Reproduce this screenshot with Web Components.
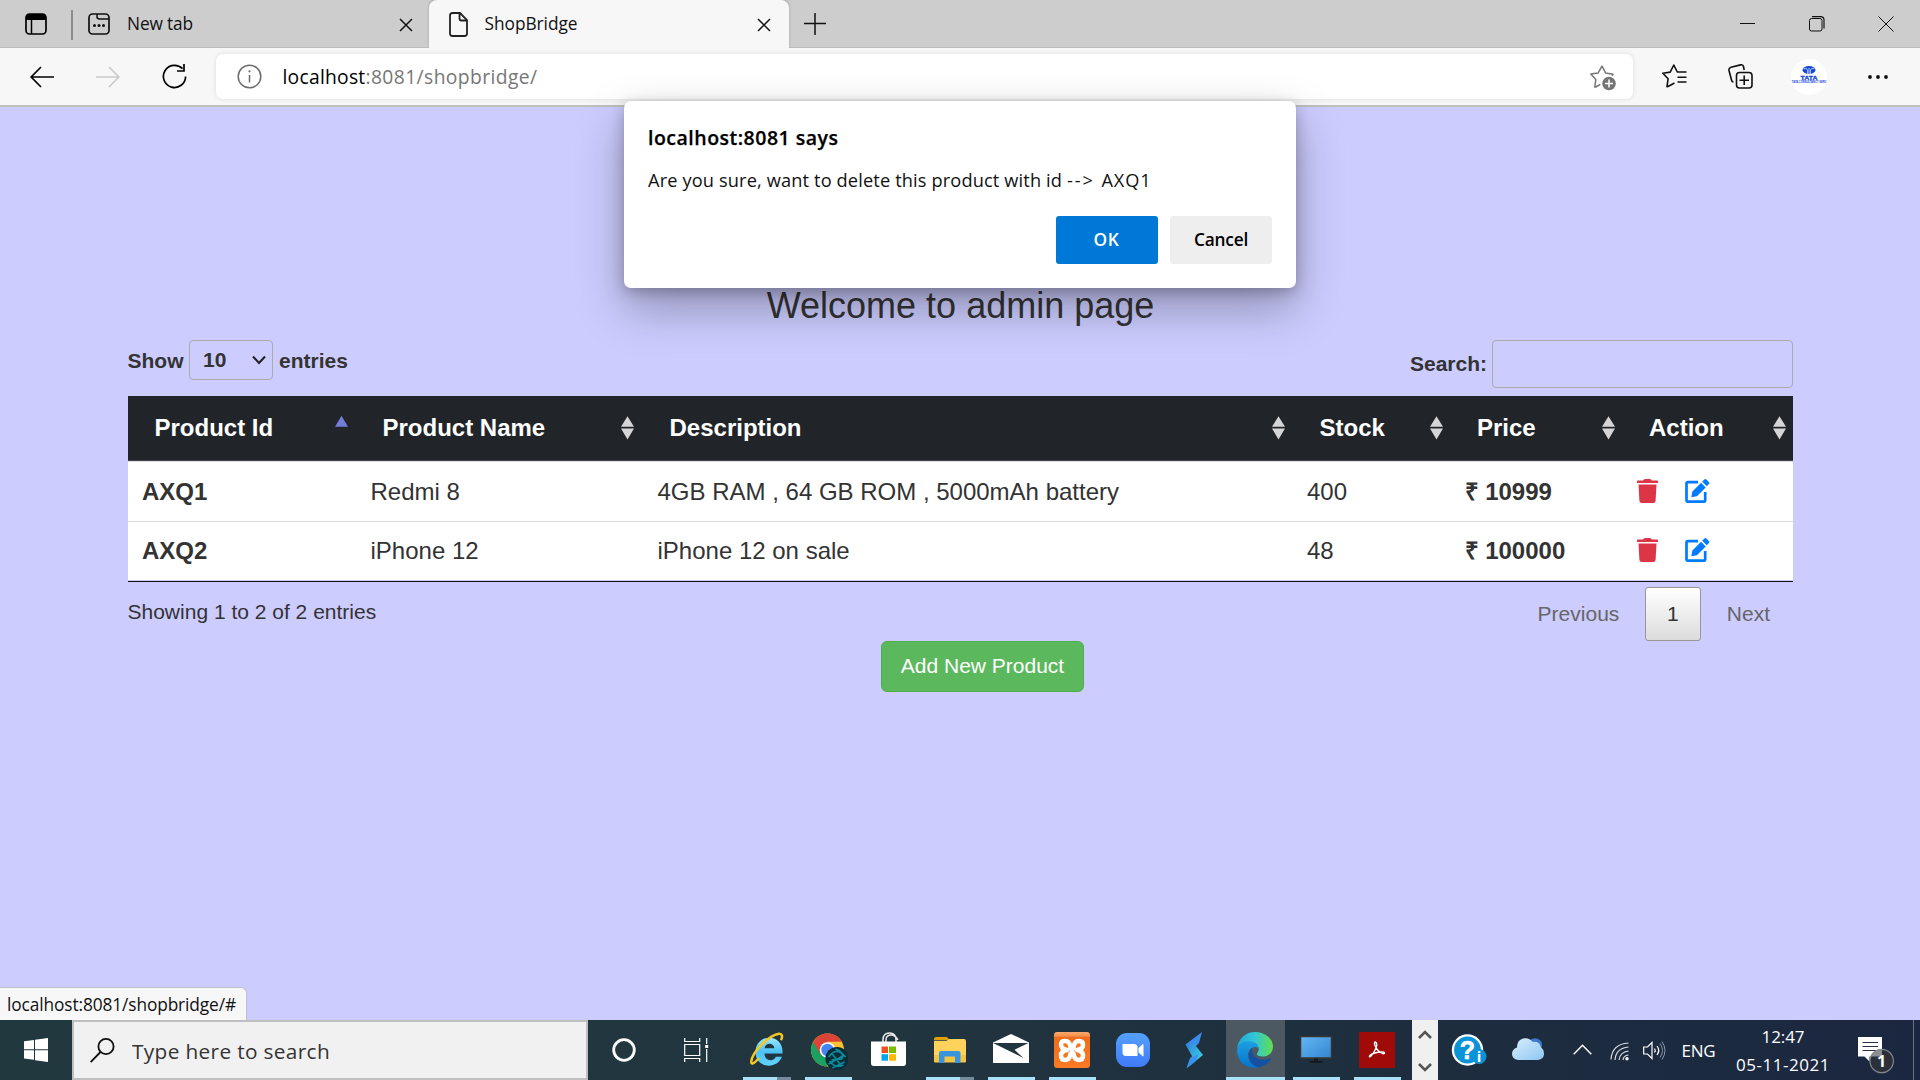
<!DOCTYPE html>
<html lang="en">
<head>
<meta charset="utf-8">
<title>ShopBridge</title>
<style>
html,body{margin:0;height:100%;overflow:hidden}
body{font-family:"Liberation Sans",Arial,sans-serif;color:#333}
</style>
</head>
<body>
<desktop-screen></desktop-screen>
<script>
const UI = '"Open Sans","Noto Sans",sans-serif';
function define(name, css, html, init) {
  const tpl = document.createElement('template');
  tpl.innerHTML = '<style>*{box-sizing:border-box}svg{display:block}' + css + '</style>' + html;
  customElements.define(name, class extends HTMLElement {
    constructor() { super(); this.attachShadow({mode: 'open'}).appendChild(tpl.content.cloneNode(true)); }
    connectedCallback() { if (init) init.call(this, this.shadowRoot); }
  });
}

/* Icons: name -> [width, height, markup] */
const ICONS = {
  tabsMenu: [22,22,'<rect x="1" y="1" width="20" height="20" rx="3.5" fill="none" stroke="#000" stroke-width="1.7"/><path d="M1 7V4.500Q1 1 4.500 1h13Q21 1 21 4.500V7z" fill="#000"/><path d="M6.500 6v15" stroke="#000" stroke-width="1.5"/>'],
  newTab: [22,22,'<rect x="1" y="1" width="20" height="20" rx="3.5" fill="none" stroke="#111" stroke-width="1.7"/><path d="M9 1v2.500Q9 6 11.500 6H21" fill="none" stroke="#111" stroke-width="1.5"/><g fill="#111"><circle cx="6.500" cy="12.500" r="1.500"/><circle cx="11" cy="12.500" r="1.500"/><circle cx="15.500" cy="12.500" r="1.500"/></g>'],
  close: [14,14,'<path d="M1 1l12 12M13 1L1 13" stroke="#111" stroke-width="1.5"/>'],
  file: [19,25,'<path d="M3.500 1h7.500L18 8v13.500Q18 24 15.500 24h-12Q1 24 1 21.500v-18Q1 1 3.500 1zM10.500 1v5.500Q10.500 8.500 12.500 8.500H18" fill="none" stroke="#222" stroke-width="1.8"/>'],
  plus: [22,22,'<path d="M11 0v22M0 10.500h22" stroke="#111" stroke-width="1.5"/>'],
  min: [16,16,'<path d="M0 7.500h15" stroke="#111" stroke-width="1"/>'],
  max: [16,16,'<rect x=".5" y="2.500" width="12.500" height="12.500" rx="2" fill="none" stroke="#111"/><path d="M3 .7h8.500Q15 .7 15 4v8.500" fill="none" stroke="#111" stroke-width="1.2"/>'],
  winClose: [16,16,'<path d="M.5.5l15 15M15.500.5l-15 15" stroke="#111" stroke-width="1"/>'],
  back: [24,22,'<path d="M24 11H1.500M11 1L1.200 11l9.800 10" fill="none" stroke="#000" stroke-width="1.7"/>'],
  fwd: [24,22,'<path d="M0 11h22.500M13 1l9.800 10L13 21" fill="none" stroke="#cacaca" stroke-width="1.7"/>'],
  reload: [25,25,'<path d="M20.500 4.700A11.100 11.100 0 1 0 23.600 12.500M22 0v7h-7" fill="none" stroke="#000" stroke-width="1.7"/>'],
  info: [25,25,'<circle cx="12.500" cy="12.500" r="11.300" fill="none" stroke="#6c6c6c" stroke-width="1.500"/><path d="M12.500 11v7.500" stroke="#6c6c6c" stroke-width="1.500"/><circle cx="12.500" cy="7.300" r="1.100" fill="#6c6c6c"/>'],
  starAdd: [27,26,'<path d="M10.300 19.300L5.800 22l-1 .1 1-7.500-5-5.500 7.300-1.100L12 1.100l3.600 6.900 7.500 1.200-1.300 1.500" fill="none" stroke="#757575" stroke-width="1.500" stroke-linejoin="round"/><circle cx="19" cy="18.500" r="6.800" fill="#757575"/><path d="M19 14.500v8M15 18.500h8" stroke="#fff" stroke-width="1.500"/>'],
  favs: [25,25,'<path d="M12.500 19L6 22.500l-1 .2 1.100-8L.9 9.200l7.300-1.100L11.800 1l3.500 7h9.200M15.500 13.200h9M15.500 18h9" fill="none" stroke="#111" stroke-width="1.600" stroke-linejoin="round"/>'],
  collections: [25,25,'<rect x="8.500" y="8.500" width="15.500" height="15.500" rx="3" fill="none" stroke="#111" stroke-width="1.600"/><path d="M16.200 11.500v9.500M11.500 16.200H21M5.500 18Q4 18 3.500 16L1 6.500Q.5 4 3 3.300l9.500-2.400q2.500-.5 3 1.600L16.200 6" fill="none" stroke="#111" stroke-width="1.600"/>'],
  dots: [20,6,'<g fill="#111"><circle cx="2" cy="3" r="1.900"/><circle cx="10" cy="3" r="1.900"/><circle cx="18" cy="3" r="1.900"/></g>'],
  tata: [36,36,'<circle cx="18" cy="18" r="18" fill="#fff"/><ellipse cx="18" cy="11" rx="6.500" ry="4" fill="#1648dc"/><path d="M16.600 15.500V11Q16.500 9 12.500 9.500M19.400 15.500V11Q19.500 9 23.500 9.500M18 9v6" fill="none" stroke="#c5d2ff" stroke-width=".9"/><text x="18" y="20.600" text-anchor="middle" font-family="Liberation Sans" font-weight="700" font-size="5.600" fill="#1648dc" stroke="#1648dc" stroke-width=".3" textLength="17" lengthAdjust="spacingAndGlyphs">TATA</text><text x=".8" y="24.400" font-family="Liberation Sans" font-weight="700" font-size="2.700" fill="#1648dc" textLength="34.500" lengthAdjust="spacingAndGlyphs">TATA CONSULTANCY SERV</text>'],
  chevDown: [14,10,'<path d="M1 1.500l6 6.500 6-6.500" fill="none" stroke="#222" stroke-width="2"/>'],
  sortBoth: [13,24,'<path d="M6.500.3L13 10.800H0zM0 12.600h13L6.500 23.500z" fill="#d5d5d8"/>'],
  sortAsc: [13,24,'<path d="M6.500-.2L13 10.800H0z" fill="#747cda"/>'],
  trash: [21,24,'<path d="M6 1.500L7 .4Q7.400 0 8 0h5q.6 0 1 .4l1 1.100h5.200q.8 0 .8.8V4H0V2.300q0-.8.800-.8zM1.500 5.600h18l-.9 16.200Q18.500 24 16.300 24H4.700Q2.500 24 2.400 21.800z" fill="#dc3545"/>'],
  edit: [25,24,'<path d="M13 3.200H3Q1.500 3.200 1.500 4.700v16.500q0 1.500 1.500 1.500h15.700q1.500 0 1.500-1.500V13" fill="none" stroke="#007bff" stroke-width="2.700"/><path d="M6.300 18.300l1.100-5.700L16.100 3.800l4.600 4.600-8.800 8.800zM17.200 2.700L19.400.6q1-1 2 0l2.500 2.500q1 1 0 2l-2.100 2.200z" fill="#007bff"/>'],
  windows: [24,24,'<path d="M0 3.200L10 1.900v9.400H0zM11 1.700L24 0v11.300H11zM0 12.300h10v9.400L0 20.600zM11 12.300h13V24l-13-1.800z" fill="#fff"/>'],
  search: [25,25,'<circle cx="16" cy="8.500" r="7.600" fill="none" stroke="#111" stroke-width="1.800"/><path d="M10.500 14L.6 24.200" stroke="#111" stroke-width="1.800"/>'],
  cortana: [24,24,'<circle cx="12" cy="12" r="10.300" fill="none" stroke="#fff" stroke-width="2.800"/>'],
  taskview: [25,24,'<path d="M.7 0v3.500h15V0M.7 24v-3.500h15V24M.7 6.500h15v11H.7zM22.700 0v6M22.700 11v13" fill="none" stroke="#fff" stroke-width="1.200"/><path d="M21.200 7h3v3h-3z" fill="#fff"/>'],
  ie: [36,36,'<defs><linearGradient id="a" x2="0" y2="1"><stop stop-color="#9be9ff"/><stop offset=".5" stop-color="#4bc2f5"/><stop offset="1" stop-color="#62d5fc"/></linearGradient></defs><path d="M33.500 21.500H15.500c0 8 9.500 8.500 11.300 3.300h6.200C28 38 6.500 36.500 6.500 20 6.500 1 35 .5 33.500 21.500zM15.600 16.300h9.800c-.5-6-9.400-6-9.800 0z" fill="url(#a)"/><path d="M10 26C4.500 32 2 33 2.300 29.500 3 20 20 3 30 1.700c3-.2 4 2.500 2 6.500" fill="none" stroke="#f5c523" stroke-width="2.500"/>'],
  chrome: [40,40,'<g transform="translate(2.500 1)"><circle cx="17" cy="17" r="16.500" fill="#f9c42f"/><path d="M2.600 9A16.600 16.600 0 0 0 16 33.600l7-10-6-6.600z" fill="#19a15f"/><path d="M2.600 9L10 21.500 17 17V8.700h14.300Q27 .5 17 .5 7.500.5 2.600 9z" fill="#dc4437"/><circle cx="17" cy="17" r="7.800" fill="#fff"/><circle cx="17" cy="17" r="6.200" fill="#4285f4"/><circle cx="26.500" cy="25.500" r="11.600" fill="#082c38"/><path d="M18 24q8-11 17 0M19 28q6 8 14 4M25 16q10 4 6 10l-10 1M18 31l16-9M22 35l12-6M21 20l10 13" fill="none" stroke="#0a8c9c" stroke-width="1.600"/></g>'],
  store: [36,36,'<path d="M12 11V8q0-7 6.500-7T25 8v3M15 11V8q0-4.500 4.500-5T27 8" fill="none" stroke="#e8e8e8" stroke-width="1.500"/><path d="M0 9.500h35v21.500Q35 34 32.500 34H2.500Q0 34 0 31z" fill="#fff"/><path d="M10.500 14.500H17v6.500h-6.500z" fill="#f25022"/><path d="M18 14.500h7v6.500h-7z" fill="#7fba00"/><path d="M10.500 22.200H17v6.500h-6.500z" fill="#00a4ef"/><path d="M18 22.200h7v6.500h-7z" fill="#ffb900"/>'],
  folder: [36,36,'<path d="M2 7Q2 5 4 5h11l2.500 3H2z" fill="#dfa000"/><path d="M2 8.800h12.500L17 7h15q2 0 2 2v21H2z" fill="#ffd35b"/><path d="M2 23h32v6.500q0 1-1 1H3q-1 0-1-1z" fill="#f6c443"/><path d="M7 31V21q0-2 2-2h17.500q2 0 2 2v10h-5.500v-6.500H12.500V31z" fill="#3895dc"/>'],
  mail: [36,36,'<path d="M0 10.500L18 2l18 8.500V31H0z" fill="#fff"/><path d="M0 11h35.500L21.500 17.800 30.500 26z" fill="#21353f"/>'],
  xampp: [36,36,'<defs><linearGradient id="b" x2="0" y2="1"><stop stop-color="#f9a96f"/><stop offset=".12" stop-color="#f38f48"/><stop offset=".14" stop-color="#ee6d1c"/><stop offset="1" stop-color="#fb7a24"/></linearGradient></defs><rect width="36" height="36" rx="3" fill="url(#b)"/><path d="M13 18q-6-1-6-5.500Q7 9 11 9t5 4q0 3 2 5 2-2 2-5 1-4 5-4t4 4-6 5q6 1 6 5.500t-4 4.500-5-4q0-3-2-3t-2 3q-1 4-5 4t-4-4.500 6-5.500z" fill="#f77720" stroke="#fff" stroke-width="4.500" stroke-linejoin="round"/>'],
  zoom: [36,36,'<defs><linearGradient id="z" x2="0" y2="1"><stop stop-color="#55a0fb"/><stop offset="1" stop-color="#407bf8"/></linearGradient></defs><rect x="1" y="1" width="34" height="34" rx="11" fill="url(#z)"/><path d="M7.500 12h11.500q3.500 0 3.500 3.500V24H11q-3.500 0-3.500-3.500zM23.500 16l4-3.700q1-.8 1 .4v11q0 1-1 .2L23.500 20.500z" fill="#fff"/>'],
  stream: [36,36,'<defs><linearGradient id="s" x2="1" y2="1"><stop stop-color="#307be3"/><stop offset="1" stop-color="#39e7dc"/></linearGradient></defs><path d="M26 0L9.500 12.500 16 18l7-7z" fill="#3b8df0"/><path d="M9.500 12.500L16 9l11 14-16 13 5-12z" fill="url(#s)"/><path d="M10.500 36L14 26l9-4-4 8z" fill="#3990ef"/>'],
  edge: [36,36,'<defs><linearGradient id="e" x1="0" x2="1"><stop stop-color="#22a6d8"/><stop offset=".5" stop-color="#31c6d8"/><stop offset="1" stop-color="#62de47"/></linearGradient><linearGradient id="f" x2="0" y2="1"><stop stop-color="#1c9fe2"/><stop offset="1" stop-color="#0674cc"/></linearGradient></defs><path d="M0 17.500C1 6 9 0 18 0c11 0 18 7.500 18 14.500 0 7-5.500 10-10.500 10-4.500 0-6-1.500-5.500-3 3-3.500 3-9-6-11C8 9 2 12 0 17.500z" fill="url(#e)"/><path d="M0 18C2 11 8 8.500 14 9.500c6 1 8 4.500 7 7C18 12.500 11 17 11 23c0 7 6 12 12 12Q10 38 3.500 29 0 24 0 18z" fill="url(#f)"/><path d="M15 16c-5 5-5 16 6 19.300 6-.5 11-4.300 12.800-8q.5-1.500-1-1C24 30 14 26 15 16z" fill="#1451a3"/>'],
  monitor: [36,36,'<defs><linearGradient id="m" x2="1" y2="1"><stop stop-color="#65b6f3"/><stop offset="1" stop-color="#3286d0"/></linearGradient></defs><rect x="2.500" y="4.500" width="31" height="21.500" fill="url(#m)" stroke="#39342f" stroke-width="1.500"/><path d="M16 26.500h4v2.500h4.500v1.800h-13V29H16z" fill="#15191c"/>'],
  acrobat: [36,36,'<rect width="36" height="36" fill="#a00a08"/><path d="M16 10q3 .5 1 6-2 5.500-5.500 8.500-1.500 1-1-.5Q12 21.500 19 20.300q6-1 6.500.5 0 2-4-.3-4-2.500-5.500-7-1-3.500 0-3.500z" fill="none" stroke="#fff" stroke-width="1.400"/>'],
  help: [37,40,'<circle cx="16.500" cy="16" r="15.700" fill="#fff"/><circle cx="16.500" cy="16" r="13.400" fill="#0b93d8"/><text x="16.500" y="25" text-anchor="middle" font-family="Liberation Sans" font-weight="700" font-size="25" fill="#fff" stroke="#fff" stroke-width=".5">?</text><circle cx="28" cy="22.500" r="7.500" fill="#0b93d8"/><text x="28" y="28" text-anchor="middle" font-family="Open Sans" font-weight="700" font-size="15" fill="#fff">i</text>'],
  cloud: [34,24,'<defs><linearGradient id="c" x2="1" y2="1"><stop stop-color="#d9effe"/><stop offset="1" stop-color="#8ec6f1"/></linearGradient></defs><path d="M18 4Q22 0 27 2t4 8z" fill="#3c78c8"/><path d="M7 23Q1 22 1 17t5-6.500Q6 3 12 1.500T22 5q6-1 8 5 3.500 3 3 7.500T27 23z" fill="url(#c)"/>'],
  chevUp: [19,11,'<path d="M.7 10.200l8.800-9 8.800 9" fill="none" stroke="#fff" stroke-width="1.400"/>'],
  wifi: [19,19,'<g fill="none" stroke="#dbe0e8" stroke-width="1.200"><path d="M1 17.500Q2 2 18.500 1M5 18q1-12 13.500-13M9 18q1-8 9.500-9M13 18q.5-4.500 5.500-5"/></g><circle cx="17" cy="16.800" r="1.700" fill="#fff"/>'],
  volume: [23,19,'<path d="M.7 6h3.800L9 1.500v16L4.500 13H.7z" fill="none" stroke="#fff" stroke-width="1.200"/><path d="M11.500 7.500q1.500 2 0 4M14 5q3.500 4.500 0 9" fill="none" stroke="#fff" stroke-width="1.200"/><path d="M17 2.500q5 7 0 14M19 .5q6 9 0 18" fill="none" stroke="#8b94a5" stroke-width="1"/>'],
  notice: [38,38,'<path d="M0 0h24v19.500H11.500v5L6.500 19.500H0z" fill="#fff"/><path d="M4.500 5.500H20M4.500 9.500H20M4.500 13.500H20" stroke="#26304a" stroke-width="1.200"/><circle cx="23.700" cy="24" r="11.700" fill="#2a2f38" stroke="#84888f" stroke-width="1.200"/><path d="M13 19.500A12 12 0 0 1 24 12v7.500H12.600z" fill="#8a8d91"/><text x="23.500" y="29.500" text-anchor="middle" font-family="Open Sans" font-weight="700" font-size="16" fill="#fff">1</text>'],
  smallUp: [14,9,'<path d="M1 8l6-6 6 6" fill="none" stroke="#555" stroke-width="2.600"/>'],
  smallDown: [14,9,'<path d="M1 1l6 6 6-6" fill="none" stroke="#555" stroke-width="2.600"/>']
};
define('ui-icon', ':host{display:block;flex:none}', '<div></div>', function (r) {
  const [w, h, m] = ICONS[this.getAttribute('name')];
  r.querySelector('div').innerHTML = `<svg width="${w}" height="${h}" viewBox="0 0 ${w} ${h}">${m}</svg>`;
});

/* One line of text whose tracking is set so that it spans the given width */
define('fit-text', ':host{display:block;flex:none;white-space:pre}span{display:inline-block}', '<span><slot></slot></span>', function (r) {
  const s = r.querySelector('span'), w = +this.getAttribute('width');
  const track = (w - s.getBoundingClientRect().width) / this.textContent.length;
  s.style.letterSpacing = track + 'px';
  this.style.width = w + 'px';
});

define('tab-strip', `:host{display:flex;height:48px;background:#cdcdcd;font:17.3px/48px ${UI};color:#111;box-shadow:inset 0 -1px #bdbdbd}
.menu{padding:13px 0 0 25px;width:71px;border:0}.sep{width:1.500px;height:30px;margin-top:10px;background:#8a8a8a}
.tab{display:flex;width:356.500px;padding-left:15.500px}.tab ui-icon:first-child{margin:13px 17px 0 0}
.on{width:360px;background:#f7f7f7;border-radius:8px 8px 0 0;padding-left:19.500px;box-shadow:0 -1px 3px #0003}
.on ui-icon:first-child{margin:12px 17px 0 0}.x{margin:18px 18.500px 0 auto}.tab:not(.on) .x{margin-right:16.500px}.plus{margin:13px 0 0 14.500px}
.win{display:flex;gap:53px;margin:16px 26px 0 auto}`,
`<ui-icon class="menu" name="tabsMenu"></ui-icon><div class="sep"></div>
<div class="tab"><ui-icon name="newTab"></ui-icon><fit-text width="66">New tab</fit-text><ui-icon class="x" name="close"></ui-icon></div>
<div class="tab on"><ui-icon name="file"></ui-icon><fit-text width="93">ShopBridge</fit-text><ui-icon class="x" name="close"></ui-icon></div>
<ui-icon class="plus" name="plus"></ui-icon>
<div class="win"><ui-icon name="min"></ui-icon><ui-icon name="max"></ui-icon><ui-icon name="winClose"></ui-icon></div>`);

define('tool-bar', `:host{display:flex;align-items:center;height:59px;padding:0 32px 0 30px;background:#f7f7f7;border-bottom:2px solid #bfbfbf;font:19.300px/44px ${UI}}
.fwd{margin:0 42px 0 41.500px}.box{display:flex;align-items:center;width:1417px;height:45px;margin-left:29px;padding:0 15.500px 0 21px;background:#fff;border-radius:7px;box-shadow:0 0 5px #0000001c}
.url{display:flex;margin:1px 0 0 21px;color:#000}.rest{color:#767676}.star{margin:2px 0 0 auto}.fav{margin-left:29.500px}.col{margin-left:41px}.av{margin:1px 41px 0 38px}`,
`<ui-icon name="back"></ui-icon><ui-icon class="fwd" name="fwd"></ui-icon><ui-icon name="reload"></ui-icon>
<div class="box"><ui-icon name="info"></ui-icon><div class="url"><fit-text width="83">localhost</fit-text><fit-text class="rest" width="172">:8081/shopbridge/</fit-text></div><ui-icon class="star" name="starAdd"></ui-icon></div>
<ui-icon class="fav" name="favs"></ui-icon><ui-icon class="col" name="collections"></ui-icon><ui-icon class="av" name="tata"></ui-icon><ui-icon name="dots"></ui-icon>`);

define('product-head', `:host{display:flex;height:65px;background:#212529;color:#fff;font-weight:700;font-size:24px;line-height:63px;border-bottom:1px solid #43474d}
div{display:flex;justify-content:space-between;padding:0 7.500px 0 27px}ui-icon{margin-top:20px}
div:nth-of-type(1){width:227.500px;padding:0 8px 0 26.500px}div:nth-of-type(2){width:287px;padding-right:9px}div:nth-of-type(3){width:649.500px;padding-right:7.500px}div:nth-of-type(4){width:157.500px;padding:0 7px 0 27.500px}div:nth-of-type(5){width:172.500px;padding-left:27.500px}div:nth-of-type(6){width:171px}`,
['Product Id','Product Name','Description','Stock','Price','Action'].map((t, i) => `<div><span>${t}</span><ui-icon name="${i ? 'sortBoth' : 'sortAsc'}"></ui-icon></div>`).join(''));

define('product-row', `:host{display:flex;height:59px;background:#fff;border-top:1px solid #ddd;font-size:24px;line-height:58px}
div{padding-left:15px;white-space:nowrap}.id{width:227.500px;padding-left:14px;font-weight:700}.name{width:287px}.desc{width:649.500px}.stock{width:157.500px}.price{width:172.500px;font-weight:700}
.act{display:flex;gap:27px;padding-top:16px}:host(.first) .act{padding-top:17px}`,
`<div class="id"><slot name="id"></slot></div><div class="name"><slot name="name"></slot></div><div class="desc"><slot name="desc"></slot></div><div class="stock"><slot name="stock"></slot></div><div class="price"><slot name="price"></slot></div><div class="act"><ui-icon name="trash"></ui-icon><ui-icon name="edit"></ui-icon></div>`);

define('admin-page', `:host{display:block;flex:1;background:#ccf;padding:179px 127px 0 128px;font-size:21px}
h3{margin:0 0 14px;font-weight:500;font-size:36px;line-height:40px;text-align:center}
.ctl{display:flex;justify-content:space-between;height:56px;font-weight:700}
.len{display:flex;line-height:42px;gap:6px;margin-left:-.5px}.sel{display:flex;align-items:center;justify-content:space-between;width:84px;height:40px;border:1px solid #aaa;border-radius:4px;padding:0 6px 0 13px;margin-left:-.5px}
.find{display:flex;line-height:48px;gap:5px}.input{width:301px;height:48px;border:1px solid #aaa;border-radius:4px}
.tbl{padding-bottom:1px;border-bottom:1px solid #111}.first{height:60px;line-height:59px}
.foot{display:flex;justify-content:space-between;padding-top:5px;line-height:50px;height:59px}.foot>span{margin-left:-.5px}
.pager{display:flex;line-height:54px;color:#666;padding-right:23px}.cur{width:56px;height:54px;margin:0 26px 0 25.500px;border:1px solid #979797;border-radius:3px;background:linear-gradient(#fff,#dcdcdc);color:#333;text-align:center;line-height:52px}
button{display:block;width:203px;height:51px;margin:0 0 0 753px;padding:0 0 2px;border:1px solid #4cae4c;border-radius:6px;background:#5cb85c;color:#fff;font:21px/47px "Liberation Sans",Arial,sans-serif}`,
`<h3>Welcome to admin page</h3>
<div class="ctl"><div class="len"><span>Show</span><div class="sel"><span>10</span><ui-icon name="chevDown"></ui-icon></div><span>entries</span></div>
<div class="find"><span>Search:</span><div class="input"></div></div></div>
<div class="tbl"><product-head></product-head>
<product-row class="first"><span slot="id">AXQ1</span><span slot="name">Redmi 8</span><span slot="desc">4GB RAM , 64 GB ROM , 5000mAh battery</span><span slot="stock">400</span><span slot="price">₹ 10999</span></product-row>
<product-row><span slot="id">AXQ2</span><span slot="name">iPhone 12</span><span slot="desc">iPhone 12 on sale</span><span slot="stock">48</span><span slot="price">₹ 100000</span></product-row></div>
<div class="foot"><span>Showing 1 to 2 of 2 entries</span><div class="pager"><span>Previous</span><div class="cur">1</div><span>Next</span></div></div>
<button>Add New Product</button>`);

define('confirm-dialog', `:host{display:flex;flex-direction:column;width:672px;height:187px;padding:20px 24px 24px 24px;background:#fff;border-radius:7px;box-shadow:0 20px 48px #0000004d,0 4px 14px #0000003d;font:18.200px/34px ${UI};color:#111}
.t{font-weight:600;font-size:19.500px;color:#000;line-height:34px;-webkit-text-stroke:.25px #000}.m{display:flex;margin-top:8px}.b{display:flex;gap:12px;justify-content:flex-end;margin-top:19px}
.k{display:flex;justify-content:center;width:102px;height:48px;line-height:48px;border-radius:3px;background:#eee;font-weight:600;font-size:17.300px;color:#000}.ok{background:#0078d7;color:#fff;padding-right:1px}`,
`<fit-text class="t" width="190.5">localhost:8081 says</fit-text><div class="m"><fit-text width="419">Are you sure, want to delete this product with id </fit-text><fit-text width="34.5">--&gt; </fit-text><fit-text width="50">AXQ1</fit-text></div>
<div class="b"><div class="k ok"><fit-text width="26">OK</fit-text></div><div class="k"><fit-text width="54">Cancel</fit-text></div></div>`);

define('status-bubble', `:host{display:block;width:247px;height:33px;padding-left:7px;background:#f7f7f7;border:1px solid #c0c0cc;border-width:1px 1px 0 0;border-radius:0 6px 0 0;font:17.300px/33px ${UI};color:#111}`,
`<fit-text width="229">localhost:8081/shopbridge/#</fit-text>`);

define('task-button', `:host{display:block;width:61px;height:60px}
.c{display:flex;flex-direction:column;justify-content:space-between;align-items:center;height:60px;padding-top:12px}
.u{display:flex;width:47px;height:3px}.u i{flex:1;background:#a9e1fb}.u b{display:none;width:14px;background:#738b9a}
:host(:not([open])) .u{visibility:hidden}:host([multi]) .u b{display:block}:host([active]) .c{background:#4c5963;width:59px;margin-left:1px}:host([active]) .u{width:59px}:host([multi]) .u{width:48px}
ui-icon{height:40px}`, `<div class="c"><ui-icon></ui-icon><div class="u"><i></i><b></b></div></div>`, null);

define('task-bar', `:host{display:flex;height:60px;background:linear-gradient(90deg,#21383f,#21353f 45%,#1d2d3e 75%,#1b2740);font-family:${UI};color:#fff}
.win{margin:18px 24px 0}.search{display:flex;width:516px;height:60px;background:#f1f1f1;border:2px solid #bfbfbf;padding:16px 0 0 16px;color:#333;font-size:20.800px;line-height:30px}
.search fit-text{margin:-2px 0 0 17px}.cort{margin:18px 0 0 24px}.tv{margin:18px 27.500px 0 48px}.strip{display:flex;flex-direction:column;justify-content:space-between;align-items:center;width:26px;margin-left:4.500px;padding:10px 0 8px;background:#f0f0f0}
.help{margin:14px 0 0 13px}.cloud{margin:17px 0 0 23px}.up{margin:24px 0 0 27.500px}.wifi{margin:22px 0 0 18px}.vol{margin:21px 0 0 14px}
.lang{margin:14px 0 0 16px;font-size:17px;line-height:34px}.clock{display:flex;flex-direction:column;align-items:center;margin:3px 0 0 20.500px;font-size:17px;line-height:28px}
.note{margin:17px 0 0 27.500px}.end{width:1.500px;height:60px;margin-left:auto;margin-right:6px;background:#69717f}
.slot{display:flex}`,
`<ui-icon class="win" name="windows"></ui-icon><div class="search"><ui-icon name="search"></ui-icon><fit-text width="198">Type here to search</fit-text></div>
<ui-icon class="cort" name="cortana"></ui-icon><ui-icon class="tv" name="taskview"></ui-icon>
<div class="slot"></div>
<div class="strip"><ui-icon name="smallUp"></ui-icon><ui-icon name="smallDown"></ui-icon></div>
<ui-icon class="help" name="help"></ui-icon><ui-icon class="cloud" name="cloud"></ui-icon><ui-icon class="up" name="chevUp"></ui-icon><ui-icon class="wifi" name="wifi"></ui-icon><ui-icon class="vol" name="volume"></ui-icon>
<fit-text class="lang" width="34">ENG</fit-text><div class="clock"><fit-text width="43">12:47</fit-text><fit-text width="94">05-11-2021</fit-text></div>
<ui-icon class="note" name="notice"></ui-icon><div class="end"></div>`, function (r) {
  const apps = [['ie','open multi'],['chrome','open'],['store',''],['folder','open multi'],['mail','open'],['xampp','open'],['zoom',''],['stream',''],['edge','open active'],['monitor','open'],['acrobat','open']];
  for (const [name, flags] of apps) {
    const b = document.createElement('task-button');
    flags.split(' ').filter(Boolean).forEach(f => b.setAttribute(f, ''));
    b.shadowRoot.querySelector('ui-icon').setAttribute('name', name);
    r.querySelector('.slot').appendChild(b);
  }
});

define('desktop-screen', `:host{display:flex;flex-direction:column;width:1920px;height:1080px;position:relative;overflow:hidden}
confirm-dialog{position:absolute;left:624px;top:101px}status-bubble{position:absolute;left:0;top:987px}`,
`<tab-strip></tab-strip><tool-bar></tool-bar><admin-page></admin-page><task-bar></task-bar><confirm-dialog></confirm-dialog><status-bubble></status-bubble>`);
</script>
</body>
</html>
